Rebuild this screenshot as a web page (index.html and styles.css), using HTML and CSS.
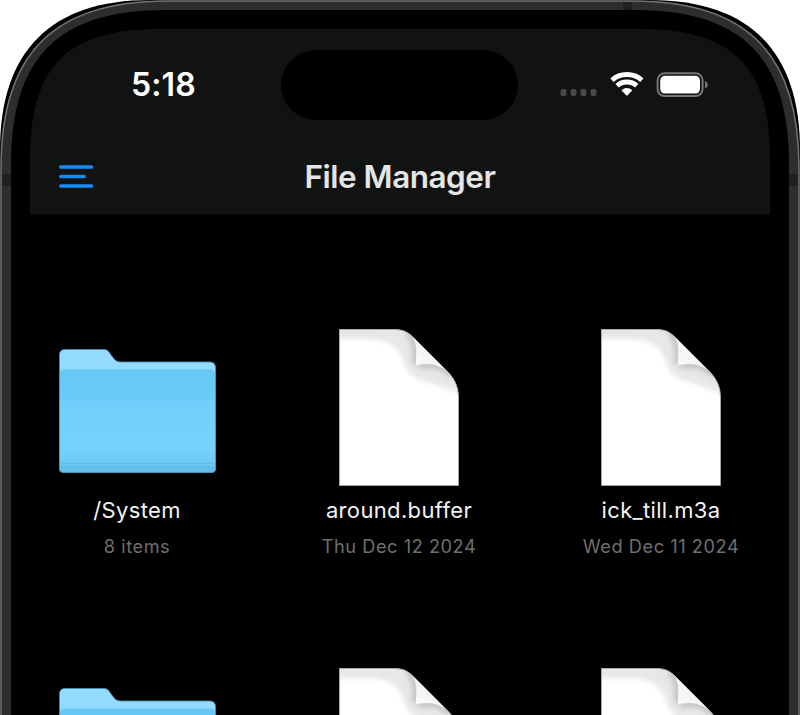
FILE: index.html
```html
<!DOCTYPE html>
<html lang="en">
<head>
<meta charset="utf-8">
<title>File Manager</title>
<link rel="stylesheet" href="styles.css">
</head>
<body>
<svg class="defs" width="0" height="0" aria-hidden="true">
  <defs>
    <linearGradient id="front" x1="0" y1="0" x2="0" y2="1">
      <stop offset="0" stop-color="#65c8f5"/><stop offset=".3" stop-color="#69ccf8"/>
      <stop offset=".31" stop-color="#71cffc"/><stop offset=".75" stop-color="#76d2ff"/>
      <stop offset=".87" stop-color="#70cbf7"/><stop offset="1" stop-color="#62bce9"/>
    </linearGradient>
    <linearGradient id="curl" x1="0" y1="1" x2="1" y2="0">
      <stop offset="0" stop-color="#fff"/><stop offset=".42" stop-color="#f4f4f4"/><stop offset=".6" stop-color="#fff"/>
    </linearGradient>
    <filter id="soft" x="-20%" y="-20%" width="140%" height="140%"><feGaussianBlur stdDeviation="2.5"/></filter>
    <clipPath id="sheet"><path d="M.5.5H55C64 .5 69 3 75 9L107 41C115 49 119.500 57 119.500 69V156.500H.5Z"/></clipPath>
    <symbol id="folder" viewBox="0 0 157 124">
      <path fill="#93dcff" d="M.5 6Q.5.500 6 .5H45C49 .5 50 3 52 6L56 11Q58 13 61 13H151Q156.500 13 156.500 19V120Q156.500 123.500 153 123.500H4Q.5 123.500 .5 120Z"/>
      <path fill="url(#front)" d="M.5 25Q1 20.500 6 20.500H151Q156 20.500 156.500 25V120Q156.500 123.500 153 123.500H4Q.5 123.500 .5 120Z"/>
      <path d="M2 114.500H155M2 118.500H155" stroke="#59afd8" stroke-opacity=".6" fill="none"/>
      <path fill="none" stroke="#4b91b5" stroke-width=".8" d="M.5 6Q.5.500 6 .5H45C49 .5 50 3 52 6L56 11Q58 13 61 13H151Q156.500 13 156.500 19V120Q156.500 123.500 153 123.500H4Q.5 123.500 .5 120Z"/>
    </symbol>
    <symbol id="file" viewBox="0 0 120 157">
      <g clip-path="url(#sheet)">
        <path fill="#fff" d="M0 0H120V157H0Z"/>
        <path fill="#e7e7e7" filter="url(#soft)" d="M-6-6H126V66C107 60 98 56 86 52C71 48 68 42 64 30C59 17 49 11 30 10H-6Z"/>
        <path fill="none" stroke="#bdbdbd" stroke-width="5" filter="url(#soft)" d="M69 3C76 11 77 21 76 35M80 37C92 35 102 36 112 46"/>
        <path fill="url(#curl)" d="M73 7C79 14 77 25 77 36C89 34 98 35 107 41Z"/>
      </g>
      <path fill="none" stroke="#aaa" stroke-width=".9" d="M.5.5H55C64 .5 69 3 75 9L107 41C115 49 119.500 57 119.500 69V156.500H.5Z"/>
    </symbol>
  </defs>
</svg>
<div class="phone">
  <svg class="bezel" viewBox="0 0 800 715" aria-hidden="true">
    <path fill="#000" d="M0 715V150C0 51 51 0 150 0H650C749 0 800 51 800 150V715Z"/>
    <path fill="#2d2d2d" stroke="#747474" stroke-width="1.500" d="M1 720V168C1 54 53 1 167 1H633C747 1 799 54 799 168V720"/>
    <path fill="#202020" d="M2 174H11V186H2ZM789 174H798V186H789ZM623 2H632V10H623Z"/>
    <path fill="#000" d="M11 715V165C11 57 58 10 166 10H634C742 10 789 57 789 165V715Z"/>
    <path fill="#111312" d="M30 214.500V159C30 66 67 29 160 29H640C733 29 770 66 770 159V214.500Z"/>
  </svg>
  <main class="screen">
    <header>
      <div class="status">
        <time>5:18</time>
        <div class="island"></div>
        <div class="signals">
          <svg width="150" height="30" viewBox="0 0 150 30" aria-hidden="true">
            <g fill="#48494a"><rect x="1.500" y="19" width="6" height="7" rx="2"/><rect x="11.500" y="19" width="6" height="7" rx="2"/><rect x="21.500" y="19" width="6" height="7" rx="2"/><rect x="31.500" y="19" width="6" height="7" rx="2"/></g>
            <g fill="none" stroke="#fff" stroke-width="4.800"><path d="M53 10.200Q59 4.500 67.900 4.500T82.800 10.200"/><path d="M58.100 15.700Q62.100 12 67.900 12T77.700 15.700"/></g>
            <path fill="#fff" d="M62.400 20.200Q67.900 15.800 73.400 20.200L68.600 25.300Q67.900 26 67.200 25.300Z"/>
            <rect x="98.600" y="3.300" width="45" height="22.800" rx="7" fill="none" stroke="#747675" stroke-width="2"/>
            <rect x="101.200" y="5.800" width="39.800" height="17.800" rx="4.800" fill="#fff"/>
            <path fill="#747675" d="M146 11Q148.800 12 148.800 14.700T146 18.500Z"/>
          </svg>
        </div>
      </div>
      <div class="nav">
        <svg class="menu" width="35" height="24" viewBox="0 0 35 24" role="img" aria-label="Menu"><path d="M2 2H32.500M2 11.500H25M2 21H32.500" stroke="#158bf8" stroke-width="3.700" stroke-linecap="round"/></svg>
        <h1>File Manager</h1>
      </div>
    </header>
    <section class="files">
      <article><div class="icon folder"><svg width="157" height="124"><use href="#folder"/></svg></div><h2>/System</h2><p>8 items</p></article>
      <article><div class="icon"><svg width="120" height="157"><use href="#file"/></svg></div><h2>around.buffer</h2><p>Thu Dec 12 2024</p></article>
      <article><div class="icon"><svg width="120" height="157"><use href="#file"/></svg></div><h2>ick_till.m3a</h2><p>Wed Dec 11 2024</p></article>
      <article><div class="icon folder"><svg width="157" height="124"><use href="#folder"/></svg></div></article>
      <article><div class="icon"><svg width="120" height="157"><use href="#file"/></svg></div></article>
      <article><div class="icon"><svg width="120" height="157"><use href="#file"/></svg></div></article>
    </section>
  </main>
</div>
</body>
</html>
```
FILE: styles.css
```css
* { box-sizing: border-box; }
body { margin: 0; background: #fff; font-family: Inter, "Liberation Sans", sans-serif; overflow: hidden; }
.defs { position: absolute; }
.phone { position: relative; width: 800px; height: 715px; overflow: hidden; }
.bezel { position: absolute; inset: 0; width: 800px; height: 715px; }
.screen { position: relative; }
header { height: 215px; padding-top: 50px; }
.status { display: grid; grid-template-columns: 281px 237px 1fr; height: 70px; align-items: center; }
time { padding-left: 131px; color: #fff; font-size: 32px; line-height: 38px; font-weight: 600; letter-spacing: .1px; }
.island { height: 70px; border-radius: 35px; background: #000; }
.signals { padding-left: 41px; height: 30px; }
.signals svg { display: block; }
.nav { display: grid; grid-template-columns: 240px 320px 240px; align-items: center; height: 54px; margin-top: 30px; }
.menu { margin-left: 59px; fill: none; }
h1 { margin: 0; color: #e5e5e5; font-size: 31.5px; line-height: 40px; font-weight: 600; text-align: center; letter-spacing: -.5px; white-space: nowrap; }
.files { display: grid; grid-template-columns: repeat(3, 262px); grid-auto-rows: 339px; padding: 114px 0 0 6px; }
article { display: flex; flex-direction: column; align-items: center; }
.icon { height: 157px; display: flex; align-items: center; justify-content: center; }
.folder { padding-top: 6px; }
.icon svg { display: block; }
h2 { margin: 9px 0 0; color: #f3f3f3; font-size: 22px; line-height: 30px; font-weight: 400; letter-spacing: .35px; white-space: nowrap; }
p { margin: 9px 0 0; color: #6f6f6f; font-size: 18.2px; line-height: 24px; letter-spacing: .55px; white-space: nowrap; }
```
